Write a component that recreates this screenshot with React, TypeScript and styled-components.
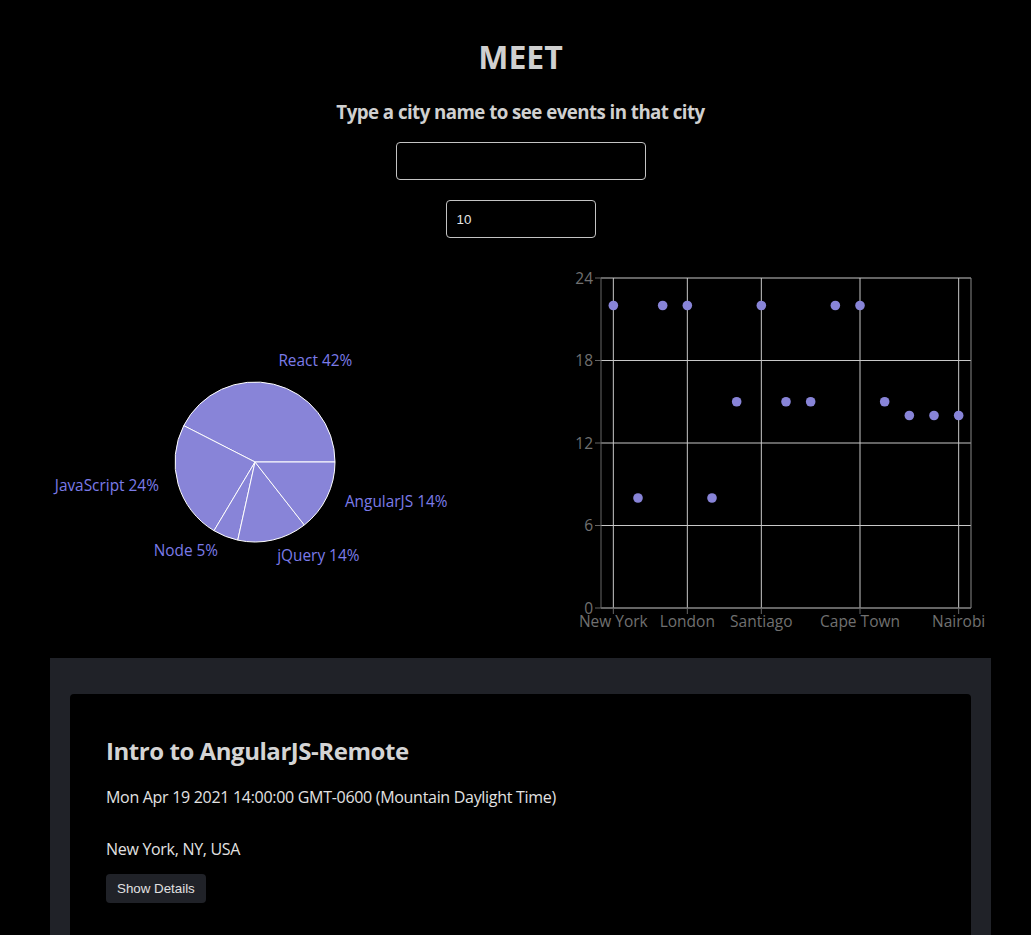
import React from 'react'
import styled, {createGlobalStyle} from 'styled-components'

const GlobalStyle = createGlobalStyle`
  html, body {
    margin: 0;
    padding: 0;
    background: #000;
    overflow-x: hidden;
  }
  body {
    color: #d2d2d2;
    font-family: "Open Sans", "Noto Sans", sans-serif;
  }
`

const Page = styled.div`
  width: 1041px;
  display: flex;
  flex-direction: column;
`

const Header = styled.header`
  display: flex;
  flex-direction: column;
  align-items: center;
`

const Title = styled.h1`
  margin: 37px 0 0;
  font-size: 32px;
  line-height: 40px;
  font-weight: 700;
  color: #d0d0d0;
`

const Subtitle = styled.h3`
  margin: 23px 0 0;
  font-size: 18.72px;
  line-height: 24px;
  font-weight: 700;
  letter-spacing: -0.55px;
  color: #d0d0d0;
`

const TextInput = styled.input<{ $width: number }>`
  box-sizing: border-box;
  width: ${p => p.$width}px;
  height: 38px;
  margin-top: ${p => p.$width > 200 ? 18 : 20}px;
  padding: 0 10px;
  background: #000;
  border: 1px solid #c4c4c4;
  border-radius: 4px;
  color: #e6e6e6;
  font-family: "Liberation Sans", Arial, sans-serif;
  font-size: 13.33px;
  outline: none;
`

const ChartsRow = styled.section`
  display: grid;
  grid-template-columns: 521px 520px;
  height: 380px;
  margin-top: 20px;
`

const ChartSvg = styled.svg`
  display: block;
  overflow: visible;
  font-family: "Open Sans", "Noto Sans", sans-serif;
  font-size: 15px;
`

const EventsPanel = styled.section`
  margin: 20px 50px 0;
  padding: 36px 20px 0;
  background: #202228;
`

const EventCard = styled.article`
  background: #000;
  border-radius: 4px 4px 0 0;
  padding: 41px 36px 40px;
  display: flex;
  flex-direction: column;
  align-items: flex-start;
`

const EventTitle = styled.h2`
  margin: 0;
  font-size: 24px;
  line-height: 32px;
  font-weight: 700;
  letter-spacing: -0.45px;
  color: #d4d4d4;
`

const EventText = styled.p<{ $gap: number }>`
  margin: ${p => p.$gap}px 0 0;
  font-size: 16px;
  line-height: 22px;
  letter-spacing: -0.3px;
  color: #e2e2e2;
`

const DetailsButton = styled.button`
  margin-top: 14px;
  height: 29px;
  padding: 0 11px;
  background: #202228;
  border: none;
  border-radius: 4px;
  color: #e0e0e0;
  font-family: "Liberation Sans", Arial, sans-serif;
  font-size: 13.33px;
  cursor: pointer;
`

const genres = [
    {name: 'React', value: 42.4},
    {name: 'JavaScript', value: 23.9},
    {name: 'Node', value: 5.1},
    {name: 'jQuery', value: 14.0},
    {name: 'AngularJS', value: 14.4},
]

const PIE_FILL = '#8884d8'
const LABEL_FILL = '#7b7be8'

const rad = (deg: number) => deg * Math.PI / 180

const PieChartView: React.FC = () => {
    const cx = 255
    const cy = 204
    const r = 80
    const total = genres.reduce((s, g) => s + g.value, 0)
    let start = 0
    const slices = genres.map(g => {
        const sweep = g.value / total * 360
        const s = start
        start += sweep
        return {...g, start: s, end: s + sweep, pct: Math.round(g.value / total * 100)}
    })
    const pt = (deg: number, radius: number) =>
        [cx + radius * Math.cos(rad(deg)), cy - radius * Math.sin(rad(deg))]

    return <ChartSvg width={521} height={380}>
        {slices.map(s => {
            const [x1, y1] = pt(s.start, r)
            const [x2, y2] = pt(s.end, r)
            const large = s.end - s.start > 180 ? 1 : 0
            return <path key={s.name}
                         d={`M${cx},${cy} L${x1},${y1} A${r},${r} 0 ${large} 0 ${x2},${y2} Z`}
                         fill={PIE_FILL} stroke='#fff' strokeWidth={1}/>
        })}
        {slices.map(s => {
            const mid = (s.start + s.end) / 2
            const [lx, ly] = pt(mid, r + 20)
            return <text key={s.name} x={lx} y={ly + 1} fill={LABEL_FILL} fontSize={15.4}
                         textAnchor={lx > cx ? 'start' : 'end'}>
                {`${s.name} ${s.pct}%`}
            </text>
        })}
    </ChartSvg>
}

const events = [
    {city: 'New York', count: 22}, {city: '', count: 8}, {city: '', count: 22},
    {city: 'London', count: 22}, {city: '', count: 8}, {city: '', count: 15},
    {city: 'Santiago', count: 22}, {city: '', count: 15}, {city: '', count: 15},
    {city: '', count: 22}, {city: 'Cape Town', count: 22}, {city: '', count: 15},
    {city: '', count: 14}, {city: '', count: 14}, {city: 'Nairobi', count: 14},
]

const ScatterChartView: React.FC = () => {
    const left = 80
    const right = 450
    const top = 20
    const bottom = 350
    const band = (right - left) / events.length
    const xOf = (i: number) => left + band * (i + 0.5)
    const yOf = (v: number) => bottom - v / 24 * (bottom - top)
    const yTicks = [0, 6, 12, 18, 24]
    const xTicks = events.map((e, i) => ({...e, x: xOf(i)})).filter(e => e.city)

    return <ChartSvg width={520} height={380}>
        {yTicks.map(t => <line key={t} x1={left} x2={right} y1={yOf(t)} y2={yOf(t)}
                               stroke='#c8c8c8' strokeWidth={1}/>)}
        {xTicks.map(t => <line key={t.city} x1={t.x} x2={t.x} y1={top} y2={bottom}
                               stroke='#c8c8c8' strokeWidth={1}/>)}
        <line x1={right} x2={right} y1={top} y2={bottom} stroke='#888' strokeWidth={1}/>
        <line x1={left} x2={left} y1={top} y2={bottom} stroke='#666'/>
        <line x1={left} x2={right} y1={bottom} y2={bottom} stroke='#666'/>
        {yTicks.map(t => <g key={t}>
            <line x1={left - 6} x2={left} y1={yOf(t)} y2={yOf(t)} stroke='#666'/>
            <text x={left - 8} y={yOf(t) + 5.5} textAnchor='end' fill='#707070' fontSize={15.5}>{t}</text>
        </g>)}
        {xTicks.map(t => <g key={t.city}>
            <line x1={t.x} x2={t.x} y1={bottom} y2={bottom + 6} stroke='#666'/>
            <text x={t.x} y={bottom + 19} textAnchor='middle' fill='#707070' fontSize={15.5}>{t.city}</text>
        </g>)}
        {events.map((e, i) => <circle key={i} cx={xOf(i)} cy={yOf(e.count)} r={4.8} fill={PIE_FILL}/>)}
    </ChartSvg>
}

export default function App() {
    return <Page>
        <GlobalStyle/>
        <Header>
            <Title>MEET</Title>
            <Subtitle>Type a city name to see events in that city</Subtitle>
            <TextInput $width={250} type='text' defaultValue=''/>
            <TextInput $width={150} type='number' defaultValue='10'/>
        </Header>
        <ChartsRow>
            <PieChartView/>
            <ScatterChartView/>
        </ChartsRow>
        <EventsPanel>
            <EventCard>
                <EventTitle>Intro to AngularJS-Remote</EventTitle>
                <EventText $gap={19}>Mon Apr 19 2021 14:00:00 GMT-0600 (Mountain Daylight Time)</EventText>
                <EventText $gap={30}>New York, NY, USA</EventText>
                <DetailsButton>Show Details</DetailsButton>
            </EventCard>
        </EventsPanel>
    </Page>
}
